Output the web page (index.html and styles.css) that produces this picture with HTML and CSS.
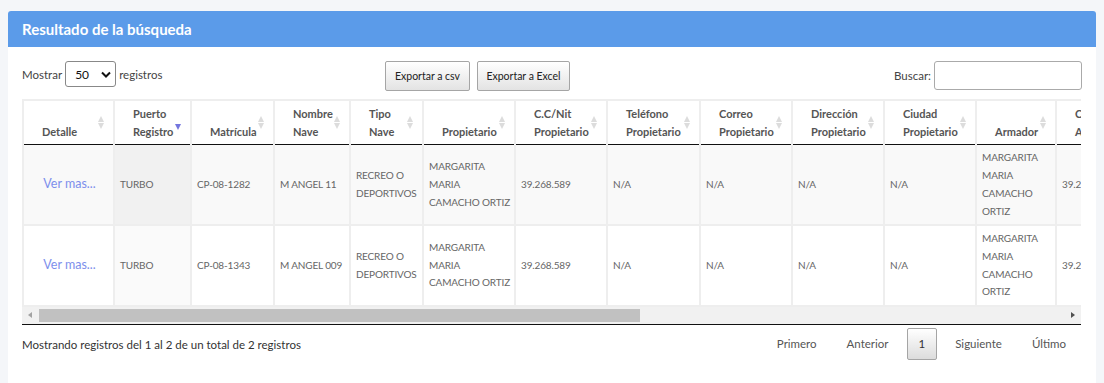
FILE: index.html
```html
<!DOCTYPE html>
<html lang="es">
<head>
    <meta charset="UTF-8">
    <meta name="viewport" content="width=device-width, initial-scale=1.0">
    <title>Resultado de la búsqueda</title>
    <link rel="stylesheet" href="styles.css">
</head>
<body>
    <div class="card">
        <div class="card-header">
            <h3>Resultado de la búsqueda</h3>
        </div>

        <div class="card-body">
            <div class="controls">
                <div class="length">
                    Mostrar
                    <span class="select">50
                        <svg width="10" height="7" viewBox="0 0 10 7"><path d="M1 1.5 L5 5.5 L9 1.5" fill="none" stroke="#111" stroke-width="2"/></svg>
                    </span>
                    registros
                </div>
                <div class="buttons">
                    <button class="btn csv">Exportar a csv</button>
                    <button class="btn excel">Exportar a Excel</button>
                </div>
                <div class="search">
                    Buscar: <input type="text">
                </div>
            </div>

            <div class="table-wrap">
                <table class="results">
                    <colgroup>
                        <col class="w91"><col class="w77"><col class="w83"><col class="w76"><col class="w73">
                        <col class="w92"><col class="w92"><col class="w93"><col class="w92"><col class="w92">
                        <col class="w92"><col class="w80"><col class="w92">
                    </colgroup>
                    <thead>
                        <tr>
                            <th>Detalle<span class="sort"></span></th>
                            <th>Puerto Registro<span class="sort desc"></span></th>
                            <th>Matrícula<span class="sort"></span></th>
                            <th>Nombre Nave<span class="sort"></span></th>
                            <th>Tipo Nave<span class="sort"></span></th>
                            <th>Propietario<span class="sort"></span></th>
                            <th>C.C/Nit Propietario<span class="sort"></span></th>
                            <th>Teléfono Propietario<span class="sort"></span></th>
                            <th>Correo Propietario<span class="sort"></span></th>
                            <th>Dirección Propietario<span class="sort"></span></th>
                            <th>Ciudad Propietario<span class="sort"></span></th>
                            <th>Armador<span class="sort"></span></th>
                            <th>C.C/Nit Armador<span class="sort"></span></th>
                        </tr>
                    </thead>
                    <tbody>
                        <tr class="odd">
                            <td class="detail"><a href="#">Ver mas...</a></td>
                            <td class="sorted">TURBO</td>
                            <td>CP-08-1282</td>
                            <td>M ANGEL 11</td>
                            <td>RECREO O DEPORTIVOS</td>
                            <td>MARGARITA MARIA CAMACHO ORTIZ</td>
                            <td>39.268.589</td>
                            <td>N/A</td>
                            <td>N/A</td>
                            <td>N/A</td>
                            <td>N/A</td>
                            <td>MARGARITA MARIA CAMACHO ORTIZ</td>
                            <td>39.268.589</td>
                        </tr>
                        <tr class="even">
                            <td class="detail"><a href="#">Ver mas...</a></td>
                            <td class="sorted">TURBO</td>
                            <td>CP-08-1343</td>
                            <td>M ANGEL 009</td>
                            <td>RECREO O DEPORTIVOS</td>
                            <td>MARGARITA MARIA CAMACHO ORTIZ</td>
                            <td>39.268.589</td>
                            <td>N/A</td>
                            <td>N/A</td>
                            <td>N/A</td>
                            <td>N/A</td>
                            <td>MARGARITA MARIA CAMACHO ORTIZ</td>
                            <td>39.268.589</td>
                        </tr>
                    </tbody>
                </table>
            </div>

            <div class="scrollbar">
                <span class="arrow left"></span>
                <div class="track"><div class="thumb"></div></div>
                <span class="arrow right"></span>
            </div>

            <div class="footer">
                <div class="info">Mostrando registros del 1 al 2 de un total de 2 registros</div>
                <div class="paging">
                    <a href="#">Primero</a>
                    <a href="#">Anterior</a>
                    <span class="current">1</span>
                    <a href="#">Siguiente</a>
                    <a href="#">Último</a>
                </div>
            </div>
        </div>
    </div>
</body>
</html>
```

FILE: styles.css
```css
* {
    margin: 0;
    padding: 0;
    box-sizing: border-box;
}

body {
    background-color: #f4f6f9;
    font-family: Lato, "Open Sans", sans-serif;
    color: #333;
    padding: 11px 8px 0 8px;
}

.card {
    background-color: white;
    border-radius: 3px 3px 0 0;
    min-height: 380px;
}

.card-header {
    background-color: #5b9be9;
    height: 36px;
    display: flex;
    align-items: center;
    padding: 0 14px;
    border-radius: 3px 3px 0 0;
}

.card-header h3 {
    color: white;
    font-size: 15px;
    font-weight: bold;
}

.card-body {
    padding: 14px 14px 0 14px;
}

/* top controls */
.controls {
    display: flex;
    align-items: flex-start;
    font-size: 11.5px;
    color: #444;
    height: 38px;
}

.length {
    display: flex;
    align-items: center;
    gap: 3px;
    height: 26px;
    width: 363px;
}

.select {
    display: inline-flex;
    align-items: center;
    justify-content: space-between;
    width: 51px;
    height: 26px;
    border: 1px solid #888;
    border-radius: 3px;
    padding: 0 4px 0 9px;
    color: #111;
    font-size: 12px;
}

.buttons {
    display: flex;
    gap: 7px;
}

.btn {
    height: 30px;
    font-family: Lato, "Open Sans", sans-serif;
    font-size: 10.5px;
    color: #222;
    background: linear-gradient(#ffffff, #e3e3e3);
    border: 1px solid #a5a5a5;
    border-radius: 2px;
}

.csv { width: 85px; }
.excel { width: 93px; }

.search {
    margin-left: auto;
    display: flex;
    align-items: center;
    gap: 3px;
    height: 29px;
}

.search input {
    width: 148px;
    height: 29px;
    border: 1px solid #aaa;
    border-radius: 3px;
}

/* table */
.table-wrap {
    overflow: hidden;
    width: 1059px;
}

.results {
    border-collapse: collapse;
    table-layout: fixed;
    width: 1125px;
    font-size: 10px;
    line-height: 17.7px;
}

.w91 { width: 91px; }
.w77 { width: 77px; }
.w83 { width: 83px; }
.w76 { width: 76px; }
.w73 { width: 73px; }
.w92 { width: 92px; }
.w93 { width: 93px; }
.w80 { width: 80px; }

.results th {
    position: relative;
    text-align: left;
    vertical-align: bottom;
    padding: 4px 16px 4px 18px;
    color: #555;
    font-size: 11px;
    font-weight: bold;
    border: 2px solid #eeeeee;
    border-bottom: 1px solid #111;
}

.sort {
    position: absolute;
    right: 8px;
    top: 50%;
    margin-top: -7px;
    width: 7px;
    height: 13px;
}

.sort::before,
.sort::after {
    content: "";
    position: absolute;
    left: 0;
    border-left: 3.5px solid transparent;
    border-right: 3.5px solid transparent;
}

.sort::before {
    top: 0;
    border-bottom: 6px solid #dcdcdc;
}

.sort::after {
    bottom: 0;
    border-top: 6px solid #dcdcdc;
}

.sort.desc {
    top: auto;
    bottom: 14px;
    margin-top: 0;
}

.sort.desc::before {
    display: none;
}

.sort.desc::after {
    border-top-color: #7476de;
}

.results td {
    padding: 4px 3px 4px 5px;
    color: #666;
    letter-spacing: -0.15px;
    vertical-align: middle;
    border: 2px solid #eeeeee;
    border-top: none;
}

.results tbody tr:first-child td {
    border-top: 1px solid #111;
}

.odd td { background-color: #f9f9f9; }
.odd td.sorted { background-color: #f1f1f1; }
.even td { background-color: #ffffff; }
.even td.sorted { background-color: #fafafa; }

.results td.detail {
    text-align: center;
    letter-spacing: 0;
}

.detail a {
    color: #7d8fec;
    text-decoration: none;
    font-size: 12.5px;
}

/* fake scrollbar */
.scrollbar {
    width: 1059px;
    height: 18px;
    background-color: #f1f1f1;
    display: flex;
    align-items: center;
    border-bottom: 1px solid #111;
}

.track {
    flex: 1;
    height: 13px;
}

.thumb {
    width: 601px;
    height: 13px;
    background-color: #c1c1c1;
    margin-left: 2px;
}

.arrow {
    width: 15px;
    height: 17px;
    position: relative;
}

.arrow.left::after,
.arrow.right::after {
    content: "";
    position: absolute;
    top: 5px;
    border-top: 3.5px solid transparent;
    border-bottom: 3.5px solid transparent;
}

.arrow.left::after {
    left: 6px;
    border-right: 4px solid #a3a3a3;
}

.arrow.right::after {
    right: 6px;
    border-left: 4px solid #505050;
}

/* footer */
.footer {
    display: flex;
    justify-content: space-between;
    align-items: center;
    width: 1059px;
    padding-top: 3px;
    font-size: 11.5px;
}

.info {
    color: #333;
}

.paging {
    display: flex;
    align-items: center;
}

.paging a,
.paging .current {
    color: #555;
    text-decoration: none;
    padding: 8px 14px;
    line-height: 14px;
    border: 1px solid transparent;
}

.paging .current {
    color: #333;
    border: 1px solid #a5a5a5;
    border-radius: 2px;
    background: linear-gradient(#ffffff, #dcdcdc);
    padding: 8px 11px;
    margin: 0 3px;
}
```
